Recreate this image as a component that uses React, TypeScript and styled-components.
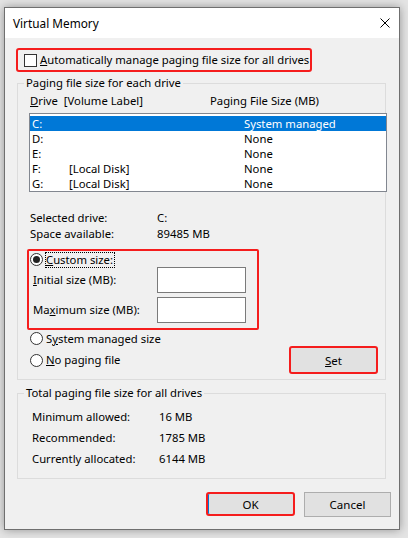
import styled, { createGlobalStyle } from "styled-components";

const GlobalStyle = createGlobalStyle`
  html, body {
    margin: 0;
    padding: 0;
  }
  body {
    background: #e4e4e4;
    font-family: "Noto Sans", "Segoe UI", sans-serif;
    font-size: 11.3px;
    line-height: 16px;
    color: #000;
    white-space: nowrap;
  }
  * {
    box-sizing: border-box;
  }
`;

const drives = [
  { letter: "C:", label: "", size: "System managed" },
  { letter: "D:", label: "", size: "None" },
  { letter: "E:", label: "", size: "None" },
  { letter: "F:", label: "[Local Disk]", size: "None" },
  { letter: "G:", label: "[Local Disk]", size: "None" },
];

const totals = [
  { label: "Minimum allowed:", value: "16 MB" },
  { label: "Recommended:", value: "1785 MB" },
  { label: "Currently allocated:", value: "6144 MB" },
];

const App = () => {
  return (
    <Page>
      <GlobalStyle />
      <Window>
        <TitleBar>
          <span>Virtual Memory</span>
          <CloseIcon width="10" height="10" viewBox="0 0 10 10">
            <path d="M0.5 0.5 L9.5 9.5 M9.5 0.5 L0.5 9.5" stroke="#000" strokeWidth="1" />
          </CloseIcon>
        </TitleBar>

        <AutoBox>
          <Checkbox />
          <span>
            <u>A</u>utomatically manage paging file size for all drives
          </span>
        </AutoBox>

        <Group>
          <Legend>Paging file size for each drive</Legend>

          <ListHeader>
            <HeaderDrive>
              <u>D</u>rive&nbsp;&nbsp;[Volume Label]
            </HeaderDrive>
            <span>Paging File Size (MB)</span>
          </ListHeader>

          <ListBox>
            {drives.map((d, i) => (
              <DriveRow key={d.letter} selected={i === 0}>
                <span>{d.letter}</span>
                <span>{d.label}</span>
                <span>{d.size}</span>
              </DriveRow>
            ))}
          </ListBox>

          <InfoBlock>
            <span>Selected drive:</span>
            <span>C:</span>
            <span>Space available:</span>
            <span>89485 MB</span>
          </InfoBlock>

          <CustomBox>
            <RadioRow>
              <Radio checked />
              <Focus>
                <u>C</u>ustom size:
              </Focus>
            </RadioRow>
            <SizeRow>
              <span>
                <u>I</u>nitial size (MB):
              </span>
              <TextBox />
            </SizeRow>
            <SizeRow gap={4}>
              <span>
                Ma<u>x</u>imum size (MB):
              </span>
              <TextBox />
            </SizeRow>
          </CustomBox>

          <PlainRadioRow>
            <Radio />
            <span>
              S<u>y</u>stem managed size
            </span>
          </PlainRadioRow>

          <SetRow>
            <RadioRow>
              <Radio />
              <span>
                <u>N</u>o paging file
              </span>
            </RadioRow>
            <Button highlighted width={89} height={28}>
              <u>S</u>et
            </Button>
          </SetRow>
        </Group>

        <Group gap={5}>
          <Legend>Total paging file size for all drives</Legend>
          <TotalsGrid>
            {totals.map((t) => (
              <TotalItem key={t.label}>
                <span>{t.label}</span>
                <span>{t.value}</span>
              </TotalItem>
            ))}
          </TotalsGrid>
        </Group>

        <Footer>
          <Button highlighted isDefault width={89} height={24}>
            OK
          </Button>
          <Button width={87} height={25}>
            Cancel
          </Button>
        </Footer>
      </Window>
    </Page>
  );
};

const Page = styled.div`
  width: 408px;
  height: 538px;
  padding: 7px 0 0 4px;
  background: #e4e4e4;
  overflow: hidden;
`;

const Window = styled.div`
  width: 396px;
  height: 523px;
  border: 1px solid #6f6f6f;
  background: #f0f0f0;
  box-shadow: 0 0 9px rgba(0, 0, 0, 0.35);
  display: flex;
  flex-direction: column;
`;

const TitleBar = styled.div`
  height: 30px;
  background: #fff;
  display: flex;
  align-items: center;
  justify-content: space-between;
  padding: 0 9px 0 8px;
  font-size: 11.8px;
`;

const CloseIcon = styled.svg`
  display: block;
`;

const AutoBox = styled.div`
  margin: 10px 0 0 11px;
  width: 296px;
  height: 24px;
  border: 2px solid #f51d1d;
  border-radius: 3px;
  display: flex;
  align-items: center;
  gap: 3px;
  padding-left: 6px;
`;

const Checkbox = styled.span`
  width: 13px;
  height: 13px;
  border: 1px solid #333;
  background: #fff;
  flex: none;
`;

const Group = styled.fieldset<{ gap?: number }>`
  margin: ${(p) => p.gap ?? 3}px 0 0 12px;
  padding: 0;
  width: 369px;
  border: 1px solid #dcdcdc;
  min-width: 0;
`;

const Legend = styled.legend`
  margin-left: 6px;
  padding: 0 2px;
  line-height: 16px;
`;

const ListHeader = styled.div`
  margin-top: 2px;
  padding-left: 12px;
  display: flex;
  height: 16px;
`;

const HeaderDrive = styled.span`
  width: 180px;
  white-space: pre;
`;

const ListBox = styled.div`
  margin: 4px 0 0 11px;
  width: 358px;
  height: 79px;
  border: 1px solid #828790;
  background: #fff;
  padding-top: 2px;
`;

const DriveRow = styled.div<{ selected?: boolean }>`
  display: grid;
  grid-template-columns: 37px 175px 1fr;
  height: 15px;
  line-height: 15px;
  padding-left: 2px;
  background: ${(p) => (p.selected ? "#0078d7" : "transparent")};
  color: ${(p) => (p.selected ? "#fff" : "#000")};
`;

const InfoBlock = styled.div`
  margin-top: 18px;
  padding-left: 12px;
  display: grid;
  grid-template-columns: 127px 1fr;
  line-height: 16px;
`;

const CustomBox = styled.div`
  margin: 7px 0 0 9px;
  width: 232px;
  height: 81px;
  border: 2px solid #f51d1d;
  border-radius: 2px;
  padding: 1px 0 0 1px;
`;

const RadioRow = styled.div`
  display: flex;
  align-items: center;
  gap: 3px;
  height: 15px;
`;

const PlainRadioRow = styled(RadioRow)`
  margin: 1px 0 0 12px;
`;

const Radio = styled.span<{ checked?: boolean }>`
  width: 13px;
  height: 13px;
  border-radius: 50%;
  border: 1px solid #333;
  background: #fff;
  flex: none;
  display: flex;
  align-items: center;
  justify-content: center;

  &::after {
    content: "";
    display: ${(p) => (p.checked ? "block" : "none")};
    width: 7px;
    height: 7px;
    border-radius: 50%;
    background: #222;
  }
`;

const Focus = styled.span`
  outline: 1px dotted #000;
  outline-offset: 0;
  padding: 0 1px 0 0;
  line-height: 14px;
`;

const SizeRow = styled.div<{ gap?: number }>`
  margin-top: ${(p) => p.gap ?? 0}px;
  display: grid;
  grid-template-columns: 124px 89px;
  align-items: center;
  padding-left: 3px;
`;

const TextBox = styled.span`
  display: block;
  height: 26px;
  border: 1px solid #7a7a7a;
  background: #fff;
`;

const SetRow = styled.div`
  display: flex;
  align-items: center;
  justify-content: space-between;
  padding: 0 7px 5px 12px;
`;

const Button = styled.button<{
  highlighted?: boolean;
  isDefault?: boolean;
  width: number;
  height: number;
}>`
  width: ${(p) => p.width}px;
  height: ${(p) => p.height}px;
  font-family: inherit;
  font-size: 11.5px;
  color: #000;
  background: #e1e1e1;
  border: ${(p) => (p.highlighted ? "2px solid #f51d1d" : "1px solid #adadad")};
  border-radius: ${(p) => (p.highlighted ? "3px" : "0")};
  box-shadow: ${(p) => (p.isDefault ? "inset 1px 0 0 #0078d7" : "none")};
  padding: 0;
  text-align: center;
`;

const TotalsGrid = styled.div`
  margin-top: 5px;
  padding: 0 0 9px 14px;
`;

const TotalItem = styled.div`
  display: grid;
  grid-template-columns: 127px 1fr;
  line-height: 21px;
`;

const Footer = styled.div`
  margin-top: 13px;
  padding-right: 8px;
  display: flex;
  justify-content: flex-end;
  gap: 9px;
`;

export default App;
